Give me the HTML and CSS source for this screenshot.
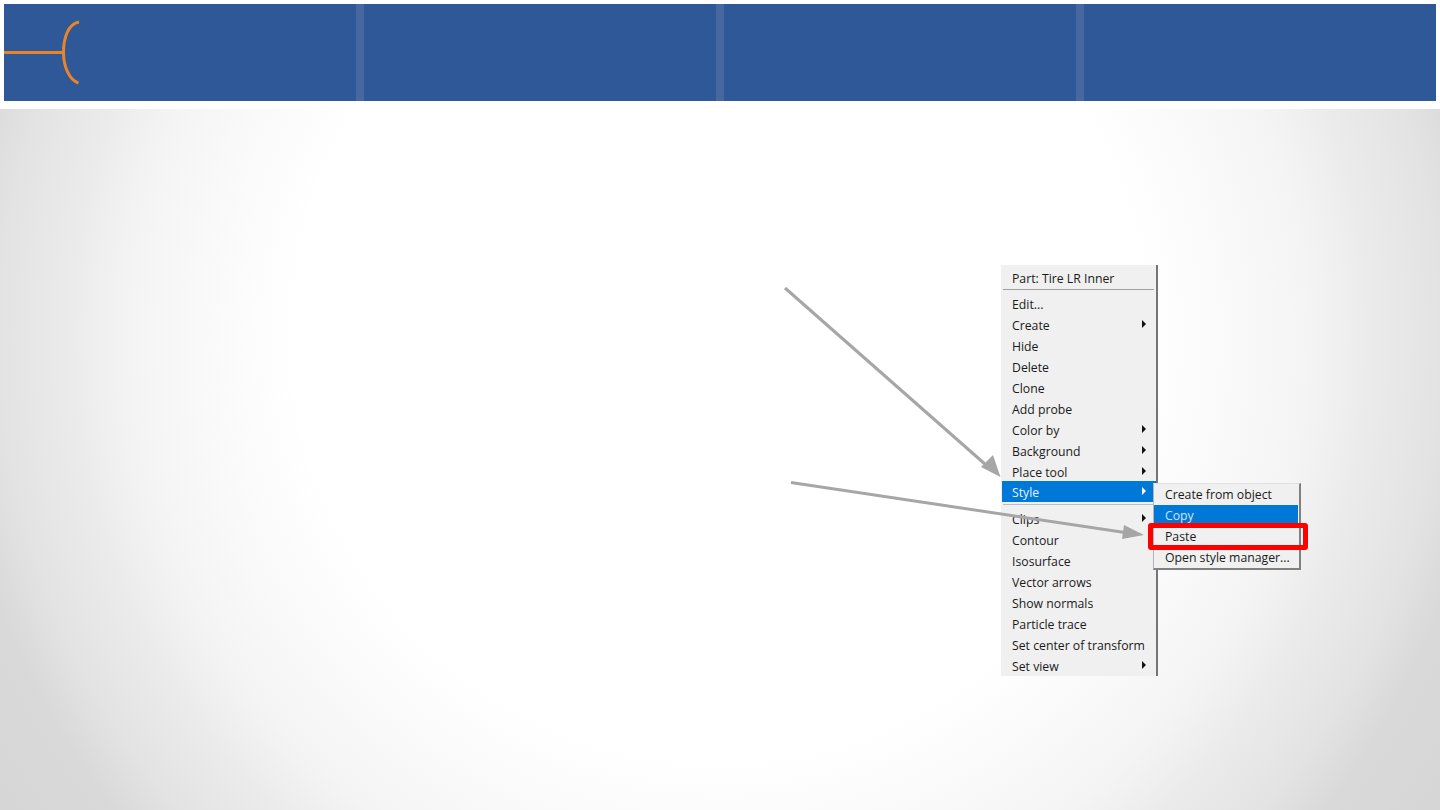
FILE: index.html
```html
<!DOCTYPE html>
<html lang="en">
<head>
<meta charset="utf-8">
<title>Style paste</title>
<link rel="stylesheet" href="styles.css">
</head>
<body>
<header class="banner">
  <div class="cell cell-logo">
    <svg class="logo" width="80" height="97" viewBox="0 0 80 97">
      <path d="M0 48.500H59" fill="none" stroke="#e8842a" stroke-width="3"/>
      <path d="M75 18C64 20 59.500 34 59.500 48.500C59.500 62 65 76 74.500 79" fill="none" stroke="#e8842a" stroke-width="3"/>
    </svg>
  </div>
  <div class="cell"></div>
  <div class="cell"></div>
  <div class="cell"></div>
</header>
<main class="stage">
  <nav class="menu">
    <div class="item">Part: Tire LR Inner</div>
    <div class="sep sep-head"></div>
    <div class="item">Edit...</div>
    <div class="item sub">Create</div>
    <div class="item">Hide</div>
    <div class="item">Delete</div>
    <div class="item">Clone</div>
    <div class="item">Add probe</div>
    <div class="item sub">Color by</div>
    <div class="item sub">Background</div>
    <div class="item sub">Place tool</div>
    <div class="item sub active">Style</div>
    <div class="sep sep-style"></div>
    <div class="item sub">Clips</div>
    <div class="item">Contour</div>
    <div class="item">Isosurface</div>
    <div class="item">Vector arrows</div>
    <div class="item">Show normals</div>
    <div class="item">Particle trace</div>
    <div class="item">Set center of transform</div>
    <div class="item sub">Set view</div>
  </nav>
  <svg class="arrows" width="1440" height="701" viewBox="0 109 1440 701">
    <path d="M785 288L990 468.500" fill="none" stroke="#a6a6a6" stroke-width="3"/>
    <path d="M1000.500 477L981 467L993 455Z" fill="#a6a6a6"/>
    <path d="M791 482.500L1125 532.500" fill="none" stroke="#a6a6a6" stroke-width="3"/>
    <path d="M1144 535L1122 539L1124 525Z" fill="#a6a6a6"/>
  </svg>
  <div class="submenu">
    <div class="subitem">Create from object</div>
    <div class="subitem active">Copy</div>
    <div class="subitem">Paste</div>
    <div class="subitem">Open style manager...</div>
  </div>
  <div class="highlight"></div>
</main>
</body>
</html>
```
FILE: styles.css
```css
* { box-sizing: border-box; }
html, body { margin: 0; padding: 0; height: 810px; overflow: hidden; background: #fff; }
body { font-family: "Open Sans", "Noto Sans", sans-serif; }
.banner {
  margin: 4px 4px 8px;
  height: 97px;
  display: grid;
  grid-template-columns: repeat(4, 1fr);
  gap: 8px;
  background: #47689f;
}
.cell { background: #2e5897; }
.cell-logo { overflow: hidden; }
.logo { display: block; }
.stage {
  position: relative;
  height: 701px;
  background: radial-gradient(circle 860px at 720px 226px, #fff 425px, #f9f9f9 520px, #f4f4f4 590px, #ebebeb 650px, #e3e3e3 720px, #d9d9d9 770px, #d6d6d6 860px);
}
.menu {
  position: absolute;
  left: 1001px;
  top: 156px;
  width: 157px;
  height: 411px;
  padding: 3px 0 0 1px;
  background: #f0f0f0;
  border-right: 2px solid #757575;
  font-size: 12.250px;
  color: #1a1a1a;
}
.item {
  position: relative;
  height: 21px;
  line-height: 21px;
  padding-left: 10px;
  white-space: nowrap;
}
.sub::after {
  content: "";
  position: absolute;
  right: 10px;
  top: 5px;
  border-left: 4px solid #111;
  border-top: 4px solid transparent;
  border-bottom: 4px solid transparent;
}
.item.active { background: #0078d7; color: #e8f2fb; margin-top: -2px; line-height: 23px; }
.sub.active::after { border-left-color: #fff; top: 6px; }
.sep { background: #a0a0a0; height: 1px; margin: 0 2px 0 1px; }
.sep-head { margin-bottom: 4px; }
.sep-style { margin-top: 2px; margin-bottom: 4px; background: #bdbdbd; }
.submenu {
  position: absolute;
  left: 1153px;
  top: 374px;
  width: 148px;
  height: 87px;
  background: #f0f0f0;
  border: 1px solid #b5b5b5;
  border-top-color: #e0e0e0;
  border-right: 2px solid #808080;
  border-bottom: 2px solid #808080;
  font-size: 12.250px;
  color: #1a1a1a;
}
.subitem {
  height: 21px;
  line-height: 21px;
  padding-left: 11px;
  white-space: nowrap;
}
.subitem.active { background: #0078d7; color: #cfe4f7; margin-right: 1px; }
.arrows { position: absolute; left: 0; top: 0; pointer-events: none; }
.highlight {
  position: absolute;
  left: 1148px;
  top: 414px;
  width: 160px;
  height: 27px;
  border: 5px solid #fe0000;
  border-radius: 3px;
}
```
